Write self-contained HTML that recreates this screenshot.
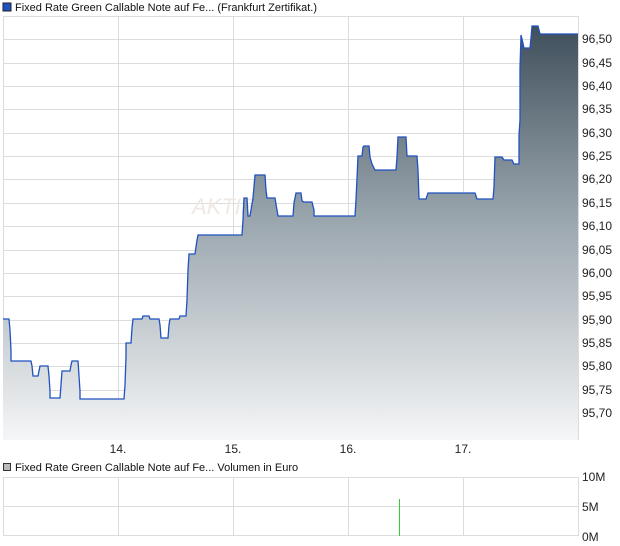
<!DOCTYPE html>
<html><head><meta charset="utf-8"><style>
body{margin:0;width:620px;height:546px;background:#fff;overflow:hidden}
svg{display:block;font-family:"Liberation Sans",sans-serif}
</style></head><body>
<svg width="620" height="546" viewBox="0 0 620 546">
<defs><linearGradient id="g" gradientUnits="userSpaceOnUse" x1="0" y1="26" x2="0" y2="440">
<stop offset="0" stop-color="#3f4f5b"/><stop offset="0.45" stop-color="#97a3ab"/><stop offset="1" stop-color="#f5f6f7"/></linearGradient></defs>
<rect x="3" y="3" width="8" height="8" fill="#1f52c0" stroke="#222" stroke-width="1"/>
<text x="15" y="11" font-size="11" fill="#111">Fixed Rate Green Callable Note auf Fe... (Frankfurt Zertifikat.)</text>
<g stroke="#dcdcdc" stroke-width="1" fill="none">
<rect x="3.5" y="16.5" width="575" height="423"/>
<path d="M118.5 17V440M233.5 17V440M348.5 17V440M463.5 17V440"/>
<path d="M3 39.5H578M3 63.5H578M3 86.5H578M3 109.5H578M3 133.5H578M3 156.5H578M3 179.5H578M3 203.5H578M3 226.5H578M3 250.5H578M3 273.5H578M3 296.5H578M3 320.5H578M3 343.5H578M3 366.5H578M3 390.5H578M3 413.5H578"/>
</g>
<text x="192" y="214" font-size="22" font-style="italic" fill="#efe9e5">AKTIEN</text>
<path fill="url(#g)" stroke="none" d="M3 319H9L10 330L11 351V361H31L32 366L33 376H38L40 366H48L49 376L50 391V398H60L61 385L62 371H70L71 365L72 361H78L79 376L80 391V399H124L125 385L126 357V343H131L132 328L133 319H142L143 316H149L150 319H159L160 325L161 338H168L169 325L170 319H179L180 316H186L187 300L188 270L189 254H195L197 240L198 235H242L243 220L244 198H247L248 216H250L253 198L255 175H265L266 190L267 198H275L277 210L278 216H293L294 203L296 193H301L302 201L304 202H312L314 210V216H355L356 200L358 156H362L363 147L364 146H369L370 157L372 164L375 170H396L397 157L398 137H406L407 156H417L418 170L419 199H426L428 193H475L477 199H493L494 187L495 157H502L504 160H512L514 164H519V135L520 120V68L521 35L522 39L524 48H530L531 38L532 26H538L540 34H578V440H3Z"/>
<path fill="none" stroke="#1f52c0" stroke-width="1.3" d="M3 319H9L10 330L11 351V361H31L32 366L33 376H38L40 366H48L49 376L50 391V398H60L61 385L62 371H70L71 365L72 361H78L79 376L80 391V399H124L125 385L126 357V343H131L132 328L133 319H142L143 316H149L150 319H159L160 325L161 338H168L169 325L170 319H179L180 316H186L187 300L188 270L189 254H195L197 240L198 235H242L243 220L244 198H247L248 216H250L253 198L255 175H265L266 190L267 198H275L277 210L278 216H293L294 203L296 193H301L302 201L304 202H312L314 210V216H355L356 200L358 156H362L363 147L364 146H369L370 157L372 164L375 170H396L397 157L398 137H406L407 156H417L418 170L419 199H426L428 193H475L477 199H493L494 187L495 157H502L504 160H512L514 164H519V135L520 120V68L521 35L522 39L524 48H530L531 38L532 26H538L540 34H578"/>
<g font-size="12" fill="#222">
<text x="582" y="43">96,50</text><text x="582" y="67">96,45</text><text x="582" y="90">96,40</text><text x="582" y="113">96,35</text><text x="582" y="137">96,30</text><text x="582" y="160">96,25</text><text x="582" y="183">96,20</text><text x="582" y="207">96,15</text><text x="582" y="230">96,10</text><text x="582" y="254">96,05</text><text x="582" y="277">96,00</text><text x="582" y="300">95,95</text><text x="582" y="324">95,90</text><text x="582" y="347">95,85</text><text x="582" y="370">95,80</text><text x="582" y="394">95,75</text><text x="582" y="417">95,70</text>
<text x="118" y="453" text-anchor="middle">14.</text><text x="233" y="453" text-anchor="middle">15.</text><text x="348" y="453" text-anchor="middle">16.</text><text x="463" y="453" text-anchor="middle">17.</text>
</g>
<rect x="3.5" y="463.5" width="7" height="7" fill="#bbb" stroke="#333" stroke-width="1"/>
<text x="15" y="471" font-size="11" fill="#111">Fixed Rate Green Callable Note auf Fe... Volumen in Euro</text>
<g stroke="#dcdcdc" stroke-width="1" fill="none">
<rect x="3.5" y="477.5" width="575" height="58"/>
<path d="M3 506.5H578M118.5 478V536M233.5 478V536M348.5 478V536M463.5 478V536"/>
</g>
<rect x="399" y="499" width="1" height="37" fill="#33cc33" shape-rendering="crispEdges"/>
<g font-size="12" fill="#222"><text x="582" y="481">10M</text><text x="582" y="511">5M</text><text x="582" y="541">0M</text></g>
</svg>
</body></html>
